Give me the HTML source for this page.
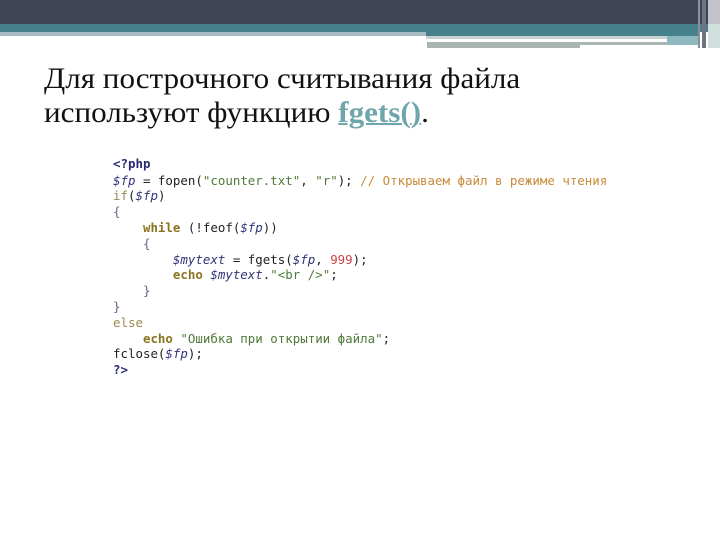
<!DOCTYPE html>
<html lang="ru">
<head>
<meta charset="utf-8">
<title>fgets</title>
<style>
html,body{margin:0;padding:0;background:#fff}
body{position:relative;width:720px;height:540px;overflow:hidden}
.r{position:absolute}
.t{position:absolute;left:44px;font-family:"Liberation Serif",serif;font-size:29.5px;line-height:34px;color:#111;white-space:nowrap;transform:scaleX(1.054);transform-origin:0 0}
.t b{color:#6fa6ab;text-decoration:underline;text-decoration-thickness:2px}
.c{position:absolute;left:113px;font-family:"DejaVu Sans Mono",monospace;font-size:12.45px;line-height:16px;white-space:pre;color:#222;filter:blur(.3px)}
.k{color:#8a7420;font-weight:bold}.l{color:#9a8a50}.v{color:#33337a;font-style:italic}.s{color:#4f7a3a}.h{color:#2a2a70;font-weight:bold}.m{color:#c98a3a}.n{color:#c44}.p{color:#668}
</style>
</head>
<body>
<div class="r" style="left:0;top:0;width:720px;height:24px;background:#3f4555"></div>
<div class="r" style="left:0;top:24px;width:720px;height:8px;background:#47818c"></div>
<div class="r" style="left:0;top:32px;width:426px;height:4px;background:#a7bcc4"></div>
<div class="r" style="left:426px;top:32px;width:272px;height:4px;background:#47818c"></div>
<div class="r" style="left:426px;top:36px;width:241px;height:3px;background:#c5d2d0"></div>
<div class="r" style="left:427px;top:42px;width:240px;height:3px;background:#a8b5b3"></div>
<div class="r" style="left:427px;top:45px;width:153px;height:3px;background:#a8b5b3"></div>
<div class="r" style="left:667px;top:36px;width:31px;height:9px;background:#8fb8c0"></div>
<div class="r" style="left:698px;top:0;width:2px;height:48px;background:#8b8f9c"></div>
<div class="r" style="left:702px;top:0;width:4px;height:48px;background:#6f7484"></div>
<div class="r" style="left:708px;top:0;width:12px;height:24px;background:#c4c2cc"></div>
<div class="r" style="left:708px;top:24px;width:12px;height:24px;background:#cfe0de"></div>

<div class="t" style="top:62px">Для построчного считывания файла</div>
<div class="t" style="top:96px">используют функцию <b>fgets()</b>.</div>

<div class="c" style="top:156px"><span class="h">&lt;?php</span></div>
<div class="c" style="top:173px"><span class="v">$fp</span> = fopen(<span class="s">"counter.txt"</span>, <span class="s">"r"</span>); <span class="m">// Открываем файл в режиме чтения</span></div>
<div class="c" style="top:188px"><span class="l">if</span>(<span class="v">$fp</span>)</div>
<div class="c" style="top:204px"><span class="p">{</span></div>
<div class="c" style="top:220px">    <span class="k">while</span> (!feof(<span class="v">$fp</span>))</div>
<div class="c" style="top:236px">    <span class="p">{</span></div>
<div class="c" style="top:252px">        <span class="v">$mytext</span> = fgets(<span class="v">$fp</span>, <span class="n">999</span>);</div>
<div class="c" style="top:267px">        <span class="k">echo</span> <span class="v">$mytext</span>.<span class="s">"&lt;br /&gt;"</span>;</div>
<div class="c" style="top:283px">    <span class="p">}</span></div>
<div class="c" style="top:299px"><span class="p">}</span></div>
<div class="c" style="top:315px"><span class="l">else</span></div>
<div class="c" style="top:331px">    <span class="k">echo</span> <span class="s">"Ошибка при открытии файла"</span>;</div>
<div class="c" style="top:346px">fclose(<span class="v">$fp</span>);</div>
<div class="c" style="top:362px"><span class="h">?&gt;</span></div>
</body>
</html>
